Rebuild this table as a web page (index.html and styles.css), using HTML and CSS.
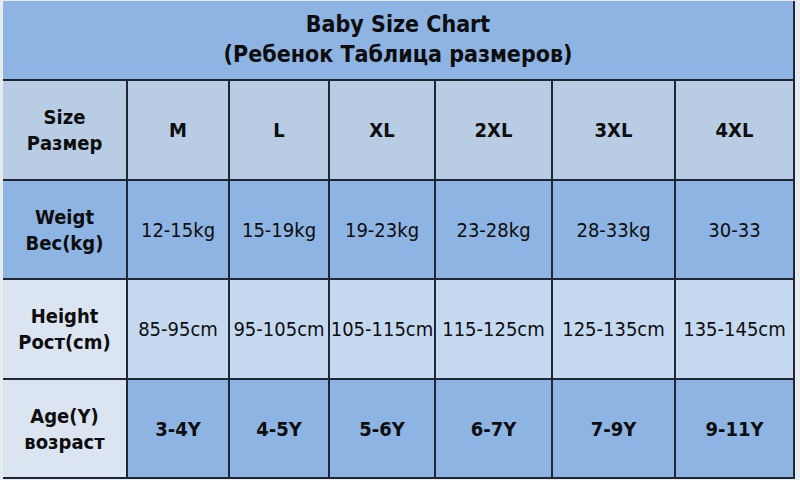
FILE: index.html
```html
<!DOCTYPE html>
<html lang="en">
<head>
<meta charset="utf-8">
<title>Baby Size Chart</title>
<link rel="stylesheet" href="styles.css">
</head>
<body>
<div class="chart">
  <div class="cell title">Baby Size Chart<br>(Ребенок Таблица размеров)</div>

  <div class="cell label size-row">Size<br>Размер</div>
  <div class="cell bold size-row">M</div>
  <div class="cell bold size-row">L</div>
  <div class="cell bold size-row">XL</div>
  <div class="cell bold size-row">2XL</div>
  <div class="cell bold size-row">3XL</div>
  <div class="cell bold size-row">4XL</div>

  <div class="cell label weight-row">Weigt<br>Вес(kg)</div>
  <div class="cell weight-row">12-15kg</div>
  <div class="cell weight-row">15-19kg</div>
  <div class="cell weight-row">19-23kg</div>
  <div class="cell weight-row">23-28kg</div>
  <div class="cell weight-row">28-33kg</div>
  <div class="cell weight-row">30-33</div>

  <div class="cell label pale">Height<br>Рост(cm)</div>
  <div class="cell height-row">85-95cm</div>
  <div class="cell height-row">95-105cm</div>
  <div class="cell height-row">105-115cm</div>
  <div class="cell height-row">115-125cm</div>
  <div class="cell height-row">125-135cm</div>
  <div class="cell height-row">135-145cm</div>

  <div class="cell label pale">Age(Y)<br>возраст</div>
  <div class="cell bold age-row">3-4Y</div>
  <div class="cell bold age-row">4-5Y</div>
  <div class="cell bold age-row">5-6Y</div>
  <div class="cell bold age-row">6-7Y</div>
  <div class="cell bold age-row">7-9Y</div>
  <div class="cell bold age-row">9-11Y</div>
</div>
</body>
</html>
```
FILE: styles.css
```css
html, body {
  margin: 0;
  padding: 0;
  background: #e6ebf2;
}

body {
  width: 800px;
  height: 480px;
  overflow: hidden;
  padding: 1px 0 0 3px;
  box-sizing: border-box;
  font-family: "DejaVu Sans Condensed", "DejaVu Sans", "Liberation Sans", sans-serif;
  font-stretch: condensed;
  color: #0d0d0d;
}

.chart {
  display: grid;
  grid-template-columns: 123px 100px 98px 104px 115px 121px 117px;
  grid-template-rows: 78px 98px 97px 98px 97px;
  gap: 2px;
  padding: 0 2px 2px 0;
  background: #1e2733;
  width: max-content;
}

.cell {
  display: flex;
  align-items: center;
  justify-content: center;
  text-align: center;
  font-size: 20px;
  line-height: 26px;
}

.title {
  grid-column: 1 / -1;
  background: #8db4e2;
  font-size: 23px;
  line-height: 30px;
  font-weight: bold;
  padding-bottom: 2px;
}

.label {
  font-weight: bold;
}

.bold {
  font-weight: bold;
}

.size-row {
  background: #b8cce4;
}

.weight-row {
  background: #8db4e2;
}

.height-row {
  background: #c5d9f1;
}

.age-row {
  background: #8db4e2;
}

.pale {
  background: #dbe5f1;
}
```
